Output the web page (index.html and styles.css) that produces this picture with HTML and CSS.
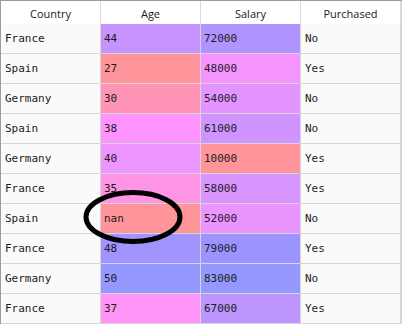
FILE: index.html
```html
<!DOCTYPE html>
<html>
<head>
<meta charset="utf-8">
<link rel="stylesheet" href="styles.css">
</head>
<body>
<div class="sheet">
  <div class="head">
    <div class="hcell">Country</div>
    <div class="hcell">Age</div>
    <div class="hcell">Salary</div>
    <div class="hcell">Purchased</div>
  </div>
  <div class="grid">
    <div class="cell">France</div><div class="cell num" style="--h:268.6">44</div><div class="cell num" style="--h:255.5">72000</div><div class="cell">No</div>
    <div class="cell">Spain</div><div class="cell num" style="--h:356.4">27</div><div class="cell num" style="--h:294.6">48000</div><div class="cell">Yes</div>
    <div class="cell">Germany</div><div class="cell num" style="--h:340.9">30</div><div class="cell num" style="--h:284.8">54000</div><div class="cell">No</div>
    <div class="cell">Spain</div><div class="cell num" style="--h:299.6">38</div><div class="cell num" style="--h:273.4">61000</div><div class="cell">No</div>
    <div class="cell">Germany</div><div class="cell num" style="--h:289.3">40</div><div class="cell num" style="--h:356.4">10000</div><div class="cell">Yes</div>
    <div class="cell">France</div><div class="cell num" style="--h:315.1">35</div><div class="cell num" style="--h:278.3">58000</div><div class="cell">Yes</div>
    <div class="cell">Spain</div><div class="cell num" style="--h:356.4">nan</div><div class="cell num" style="--h:288.0">52000</div><div class="cell">No</div>
    <div class="cell">France</div><div class="cell num" style="--h:247.9">48</div><div class="cell num" style="--h:244.1">79000</div><div class="cell">Yes</div>
    <div class="cell">Germany</div><div class="cell num" style="--h:237.6">50</div><div class="cell num" style="--h:237.6">83000</div><div class="cell">No</div>
    <div class="cell">France</div><div class="cell num" style="--h:304.7">37</div><div class="cell num" style="--h:263.6">67000</div><div class="cell">Yes</div>
  </div>
  <svg class="mark" width="110" height="64" viewBox="0 0 110 64">
    <ellipse cx="55" cy="32" rx="47" ry="24.5" fill="none" stroke="#000" stroke-width="5"/>
  </svg>
</div>
</body>
</html>
```
FILE: styles.css
```css
html, body {
  margin: 0;
  padding: 0;
  background: #ffffff;
}
.sheet {
  position: relative;
  width: 401px;
  border-left: 1px solid #9c9c9c;
  border-top: 1px solid #9c9c9c;
}
.head {
  display: grid;
  grid-template-columns: repeat(4, 99px);
  column-gap: 1px;
  padding-right: 1px;
  background: #dadada;
  height: 23px;
}
.hcell {
  background: #ffffff;
  font-family: "Open Sans", "Noto Sans", sans-serif;
  font-size: 11px;
  color: #1a1a1a;
  display: flex;
  align-items: center;
  justify-content: center;
  padding-top: 1px;
}
.grid {
  display: grid;
  grid-template-columns: repeat(4, 99px);
  grid-auto-rows: 29px;
  gap: 1px;
  padding: 0 1px 1px 0;
  background: #d6d6d6;
}
.cell {
  background: #fafafa;
  font-family: "DejaVu Sans Mono", "Liberation Mono", monospace;
  font-size: 11px;
  color: #1c1c1c;
  display: flex;
  align-items: center;
  padding-left: 4px;
}
.cell.num {
  padding-left: 3px;
  background: linear-gradient(hsla(var(--h), 100%, 65%, 0.6), hsla(var(--h), 100%, 65%, 0.6)), #ffffff;
}
.mark {
  position: absolute;
  left: 77px;
  top: 184px;
}
```
